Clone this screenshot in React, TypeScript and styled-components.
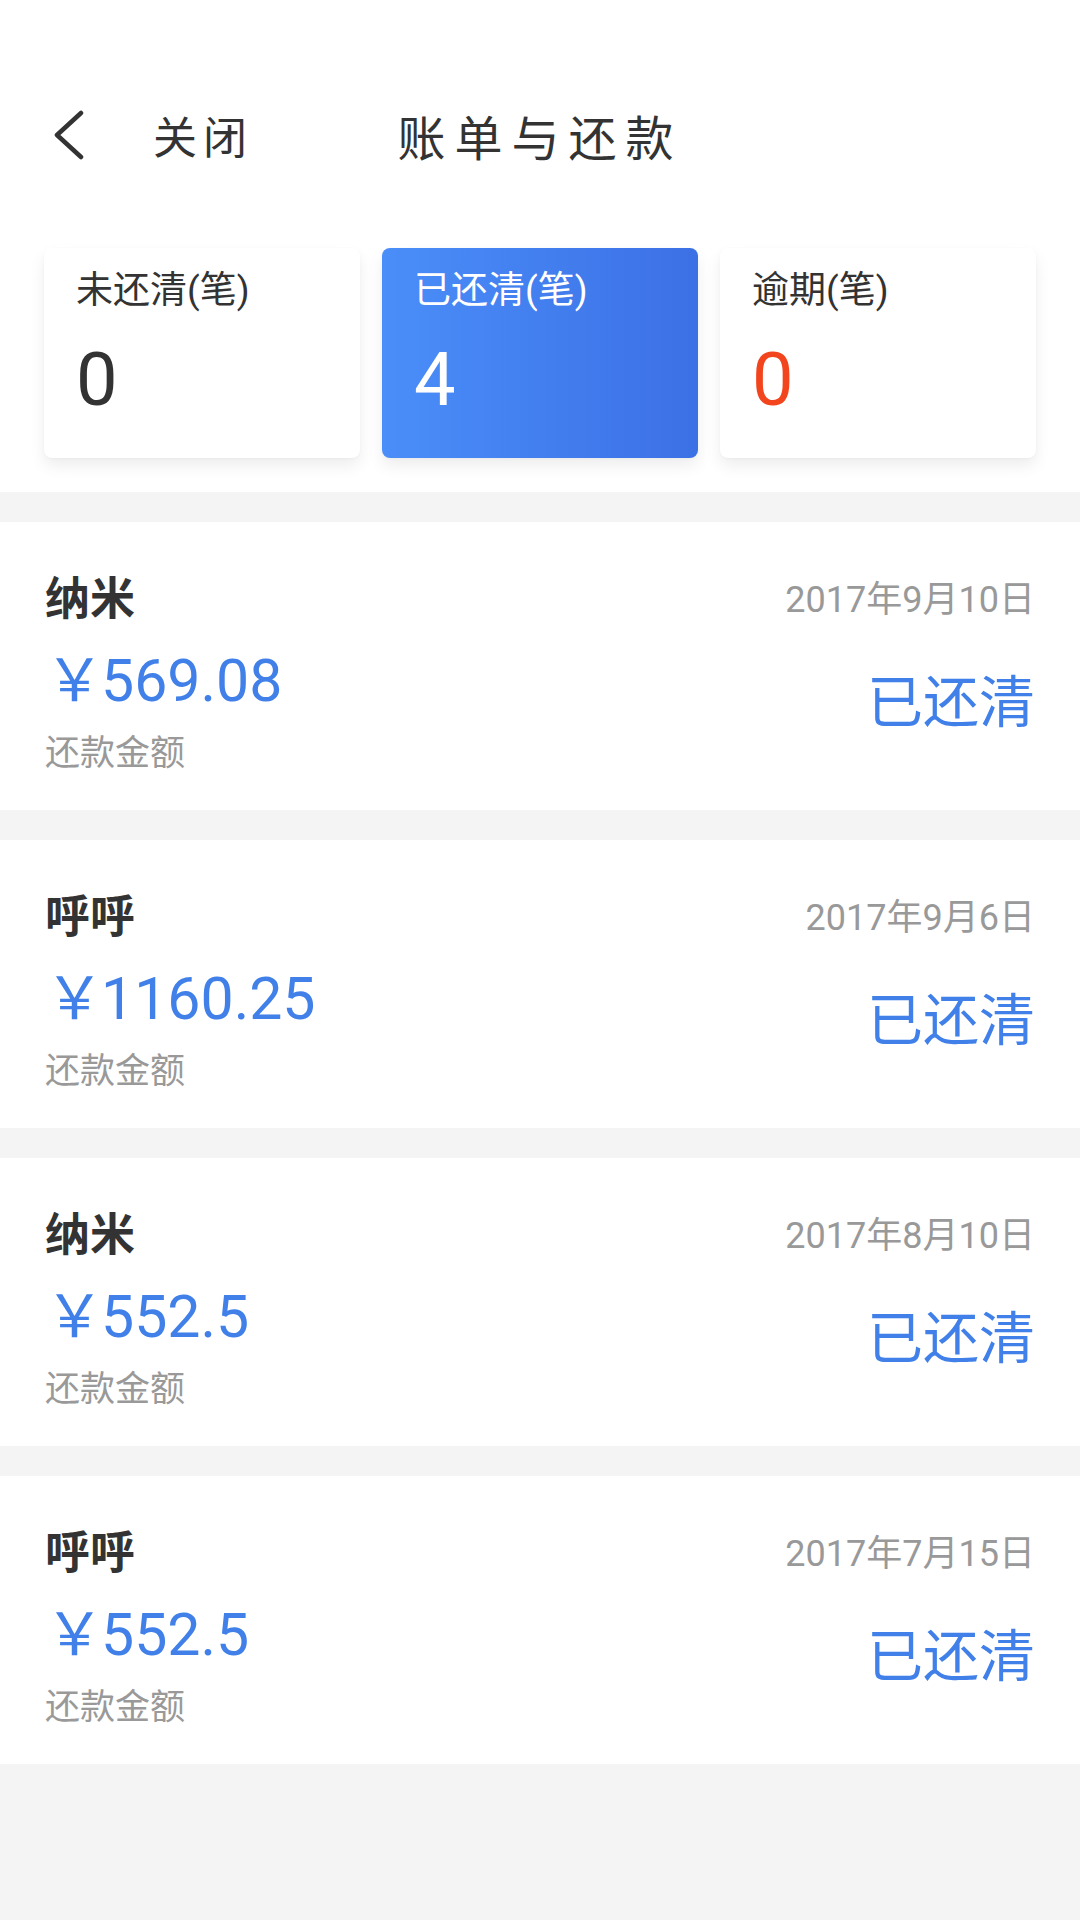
import React from 'react'
import styled, { createGlobalStyle } from 'styled-components'

const GlobalStyle = createGlobalStyle`
  html, body {
    margin: 0;
    padding: 0;
    background: #f4f4f4;
  }
  body {
    font-family: Roboto, "Noto Sans CJK SC", sans-serif;
    color: #333;
  }
`

const Page = styled.div`
  width: 1080px;
  min-height: 1920px;
  background: #f4f4f4;
`

const Top = styled.section`
  background: #fff;
  padding-top: 80px;
  padding-bottom: 34px;
`

const Header = styled.header`
  height: 110px;
  display: grid;
  grid-template-columns: 1fr auto 1fr;
  align-items: center;
`

const BackBox = styled.div`
  display: flex;
  align-items: center;
  padding-left: 54px;
`

const CloseText = styled.span`
  margin-left: 69px;
  font-family: "Noto Sans CJK SC", sans-serif;
  font-size: 44px;
  line-height: 50px;
  letter-spacing: 6px;
  color: #333;
`

const Title = styled.h1`
  margin: 0;
  font-family: "Noto Sans CJK SC", sans-serif;
  font-weight: 400;
  font-size: 48px;
  line-height: 56px;
  letter-spacing: 9px;
  color: #333;
`

const StatRow = styled.div`
  margin-top: 58px;
  padding: 0 44px;
  display: grid;
  grid-template-columns: repeat(3, 1fr);
  gap: 22px;
`

const StatCard = styled.div<{ $active?: boolean }>`
  height: 210px;
  box-sizing: border-box;
  padding: 21px 0 0 32px;
  border-radius: 8px;
  background: ${({ $active }) =>
    $active ? 'linear-gradient(90deg, #4a8ef9 0%, #3c70e5 100%)' : '#fff'};
  box-shadow: 0 8px 16px rgba(0, 0, 0, 0.07), 0 1px 3px rgba(0, 0, 0, 0.03);
  color: ${({ $active }) => ($active ? '#fff' : '#333')};
`

const StatLabel = styled.div`
  font-size: 37px;
  line-height: 44px;
`

const StatValue = styled.div<{ $color?: string }>`
  margin-top: 27px;
  font-size: 74px;
  line-height: 80px;
  color: ${({ $color }) => $color || 'inherit'};
`

const List = styled.div`
  display: flex;
  flex-direction: column;
  gap: 30px;
  padding-top: 30px;
`

const Bill = styled.div`
  height: 288px;
  box-sizing: border-box;
  background: #fff;
  padding: 51px 45px 0 45px;
  display: flex;
  justify-content: space-between;
`

const BillLeft = styled.div`
  display: flex;
  flex-direction: column;
`

const BillRight = styled.div`
  display: flex;
  flex-direction: column;
  align-items: flex-end;
  padding-top: 7px;
`

const Name = styled.div`
  font-size: 45px;
  line-height: 54px;
  font-weight: 700;
  color: #333;
`

const Amount = styled.div`
  margin-top: 22px;
  font-size: 59px;
  line-height: 64px;
  color: #4080e8;
`

const Yen = styled.span`
  margin-right: -3px;
`

const AmountLabel = styled.div`
  margin-top: 21px;
  font-size: 35px;
  line-height: 40px;
  color: #999;
`

const DateText = styled.div`
  font-size: 36px;
  line-height: 40px;
  color: #999;
`

const Status = styled.div`
  margin-top: 52px;
  font-size: 56px;
  line-height: 62px;
  color: #4080e8;
`

const ChevronLeft = () => (
  <svg width="30" height="50" viewBox="0 0 30 50">
    <path
      d="M27 3 L3 25 L27 47"
      fill="none"
      stroke="#333"
      strokeWidth="4.5"
      strokeLinecap="round"
      strokeLinejoin="round"
    />
  </svg>
)

const bills = [
  { name: '纳米', date: '2017年9月10日', amount: '569.08' },
  { name: '呼呼', date: '2017年9月6日', amount: '1160.25' },
  { name: '纳米', date: '2017年8月10日', amount: '552.5' },
  { name: '呼呼', date: '2017年7月15日', amount: '552.5' },
]

export default function App() {
  return (
    <Page>
      <GlobalStyle />
      <Top>
        <Header>
          <BackBox>
            <ChevronLeft />
            <CloseText>关闭</CloseText>
          </BackBox>
          <Title>账单与还款</Title>
          <div />
        </Header>
        <StatRow>
          <StatCard>
            <StatLabel>未还清(笔)</StatLabel>
            <StatValue>0</StatValue>
          </StatCard>
          <StatCard $active>
            <StatLabel>已还清(笔)</StatLabel>
            <StatValue>4</StatValue>
          </StatCard>
          <StatCard>
            <StatLabel>逾期(笔)</StatLabel>
            <StatValue $color="#f2451d">0</StatValue>
          </StatCard>
        </StatRow>
      </Top>
      <List>
        {bills.map((b, i) => (
          <Bill key={i}>
            <BillLeft>
              <Name>{b.name}</Name>
              <Amount>
                <Yen>￥</Yen>
                {b.amount}
              </Amount>
              <AmountLabel>还款金额</AmountLabel>
            </BillLeft>
            <BillRight>
              <DateText>{b.date}</DateText>
              <Status>已还清</Status>
            </BillRight>
          </Bill>
        ))}
      </List>
    </Page>
  )
}
